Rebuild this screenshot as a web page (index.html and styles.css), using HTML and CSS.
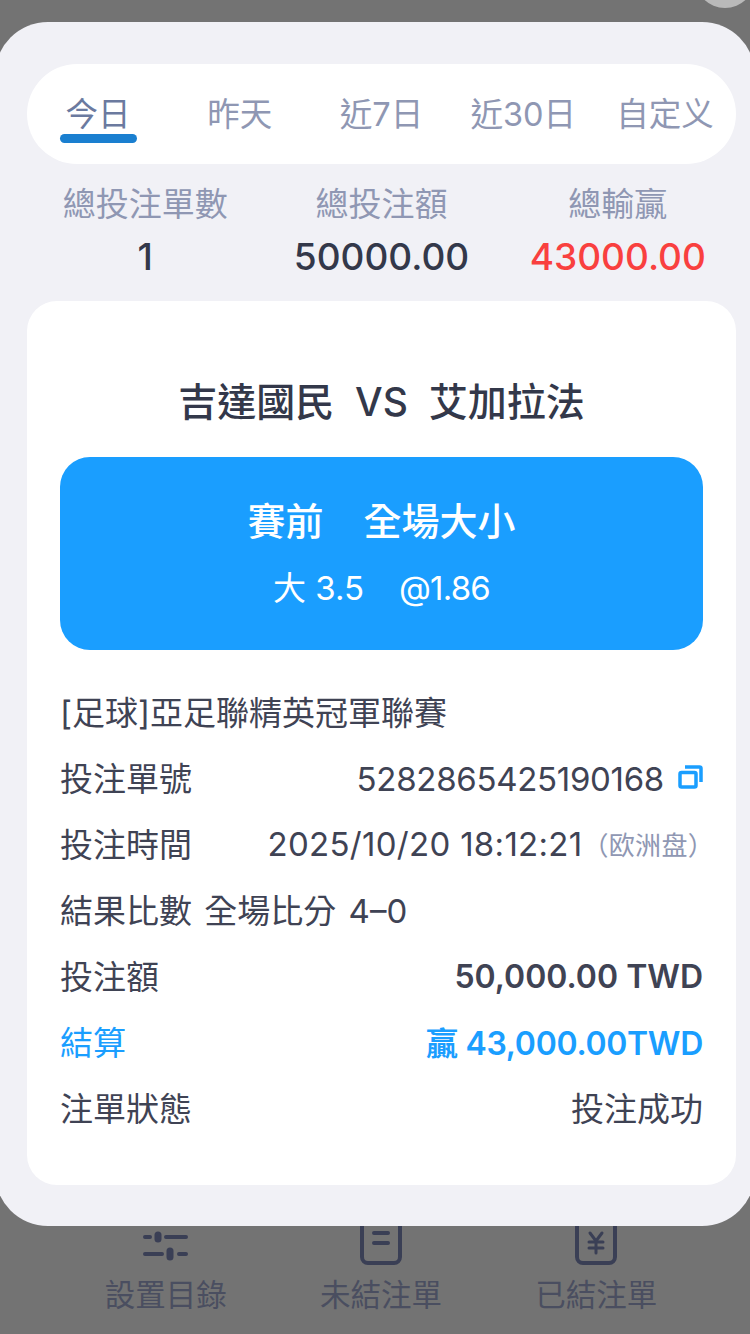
FILE: index.html
```html
<!DOCTYPE html>
<html lang="zh-Hant">
<head>
    <meta charset="UTF-8">
    <meta name="viewport" content="width=device-width, initial-scale=1.0">
    <title>注單詳情</title>
    <link rel="stylesheet" href="styles.css">
</head>
<body>
    <div class="page">
        <div class="corner-dot"></div>

        <div class="sheet">
            <div class="tabs">
                <div class="tab active">今日</div>
                <div class="tab">昨天</div>
                <div class="tab">近7日</div>
                <div class="tab">近30日</div>
                <div class="tab">自定义</div>
            </div>

            <div class="stats">
                <div class="stat">
                    <div class="stat-label">總投注單數</div>
                    <div class="stat-value">1</div>
                </div>
                <div class="stat">
                    <div class="stat-label">總投注額</div>
                    <div class="stat-value">50000.00</div>
                </div>
                <div class="stat">
                    <div class="stat-label">總輸贏</div>
                    <div class="stat-value red">43000.00</div>
                </div>
            </div>

            <div class="card">
                <h2 class="match">吉達國民&nbsp; VS &nbsp;艾加拉法</h2>

                <div class="bet-box">
                    <div class="bet-type">
                        <span>賽前</span>
                        <span>全場大小</span>
                    </div>
                    <div class="bet-odds">
                        <span>大 3.5</span>
                        <span class="odds">@1.86</span>
                    </div>
                </div>

                <div class="rows">
                    <div class="row">[足球]亞足聯精英冠軍聯賽</div>
                    <div class="row">
                        <span>投注單號</span>
                        <span class="row-value serial">5282865425190168
                            <svg class="copy-icon" width="25" height="24" viewBox="0 0 25 24" fill="none" stroke="#1a9eff" stroke-width="3.5">
                                <rect x="2" y="7.5" width="16" height="14.5" rx="1.5"/>
                                <path d="M7 2h14.5a1.5 1.5 0 0 1 1.5 1.5V17"/>
                            </svg>
                        </span>
                    </div>
                    <div class="row">
                        <span>投注時間</span>
                        <span class="row-value time">2025/10/20 18:12:21<span class="note">（欧洲盘）</span></span>
                    </div>
                    <div class="row score">結果比數 全場比分 4–0</div>
                    <div class="row">
                        <span>投注額</span>
                        <span class="row-value strong">50,000.00 TWD</span>
                    </div>
                    <div class="row blue">
                        <span>結算</span>
                        <span class="row-value strong">贏 43,000.00TWD</span>
                    </div>
                    <div class="row">
                        <span>注單狀態</span>
                        <span class="row-value">投注成功</span>
                    </div>
                </div>
            </div>
        </div>

        <div class="bottom-nav">
            <div class="nav-item">
                <svg width="48" height="62" viewBox="0 0 48 62" fill="none" stroke="#3a3f55" stroke-width="4" stroke-linecap="round">
                    <path d="M3 33h5M24 33h20"/>
                    <path d="M16 31v4" stroke-width="7"/>
                    <path d="M3 50h17M37 50h7"/>
                    <path d="M28 47v6" stroke-width="7"/>
                </svg>
                <span>設置目錄</span>
            </div>
            <div class="nav-item">
                <svg width="48" height="62" viewBox="0 0 48 62" fill="none" stroke="#3a3f55" stroke-width="4" stroke-linecap="round">
                    <rect x="5" y="2" width="38" height="57" rx="6"/>
                    <path d="M17 29h14M17 39h14"/>
                </svg>
                <span>未結注單</span>
            </div>
            <div class="nav-item">
                <svg width="48" height="62" viewBox="0 0 48 62" fill="none" stroke="#3a3f55" stroke-width="4" stroke-linecap="round">
                    <rect x="5" y="2" width="38" height="57" rx="6"/>
                    <path d="M18 29l6 8 6-8M24 37v12M17 38h14M17 44h14" stroke-width="3"/>
                </svg>
                <span>已結注單</span>
            </div>
        </div>
    </div>
</body>
</html>
```

FILE: styles.css
```css
* {
    box-sizing: border-box;
}

body {
    margin: 0;
    background-color: #737373;
    font-family: 'Inter', 'Noto Sans CJK TC', sans-serif;
    color: #3f4354;
    overflow: hidden;
}

.page {
    position: relative;
    height: 1334px;
    padding-top: 22px;
    overflow: hidden;
}

.corner-dot {
    position: absolute;
    top: -52px;
    right: -5px;
    width: 60px;
    height: 60px;
    border-radius: 50%;
    background-color: #b9b9b9;
}

/* sheet runs a little past both screen edges */
.sheet {
    position: relative;
    z-index: 2;
    height: 1204px;
    margin: 0 -5px;
    padding: 42px 19px 0 32px;
    background-color: #f1f1f6;
    border-radius: 53px;
}

.tabs {
    display: grid;
    grid-template-columns: repeat(5, 1fr);
    height: 100px;
    background-color: #fff;
    border-radius: 50px;
}

.tab {
    position: relative;
    padding-top: 30px;
    text-align: center;
    font-size: 32.5px;
    line-height: 42px;
    color: #8f97b3;
}

.tab.active {
    color: #6b7a9f;
}

.tab.active::after {
    content: "";
    position: absolute;
    left: 33px;
    top: 70px;
    width: 77px;
    height: 9px;
    border-radius: 5px;
    background-color: #1a7fd0;
}

.stats {
    display: grid;
    grid-template-columns: repeat(3, 1fr);
    height: 137px;
    padding-top: 18px;
    text-align: center;
}

.stat-label {
    font-size: 33px;
    line-height: 44px;
    color: #8f97b3;
}

.stat-value {
    margin-top: 8px;
    font-size: 37px;
    font-weight: 500;
    line-height: 46px;
    color: #33384a;
}

.stat-value.red {
    color: #f9403f;
}

.card {
    height: 884px;
    padding: 74px 33px 0;
    background-color: #fff;
    border-radius: 30px;
}

.match {
    margin: 0;
    text-align: center;
    font-size: 39px;
    font-weight: 500;
    line-height: 54px;
    color: #33384a;
}

.bet-box {
    height: 193px;
    margin-top: 28px;
    padding-top: 38px;
    color: #fff;
    background-color: #1a9eff;
    border-radius: 30px;
}

.bet-type {
    display: flex;
    justify-content: center;
    gap: 40px;
    font-size: 38px;
    font-weight: 500;
    line-height: 52px;
}

.bet-odds {
    display: flex;
    justify-content: center;
    gap: 35px;
    margin-top: 19px;
    font-size: 33px;
    line-height: 44px;
}

.odds {
    letter-spacing: -0.8px;
}

.rows {
    margin-top: 28px;
}

.row {
    display: flex;
    justify-content: space-between;
    align-items: center;
    height: 66px;
    font-size: 33px;
    white-space: nowrap;
}

.row.score {
    word-spacing: 3px;
}

.row-value {
    display: flex;
    align-items: center;
}

.row-value.serial {
    padding-top: 3px;
    letter-spacing: -0.3px;
}

.row-value.time {
    padding-top: 1px;
    letter-spacing: 0.3px;
}

.row-value.strong {
    padding-top: 2px;
    font-size: 32px;
    font-weight: 600;
}

.row.blue .row-value.strong {
    padding-top: 0;
    letter-spacing: -0.3px;
}

.row.blue {
    color: #1a9eff;
}

.copy-icon {
    margin-top: -4px;
    margin-left: 14px;
}

/* fullwidth bracket has empty space on its right */
.note {
    margin-right: -11px;
    font-size: 26px;
    color: #8f97b3;
}

.bottom-nav {
    position: relative;
    z-index: 1;
    display: grid;
    grid-template-columns: repeat(3, 1fr);
    margin-top: -22px;
    padding: 0 46px 0 58px;
}

.nav-item {
    display: flex;
    flex-direction: column;
    align-items: center;
    font-size: 30.5px;
    line-height: 42px;
    color: #4a4e60;
}

.nav-item span {
    margin-top: 8px;
}
```
